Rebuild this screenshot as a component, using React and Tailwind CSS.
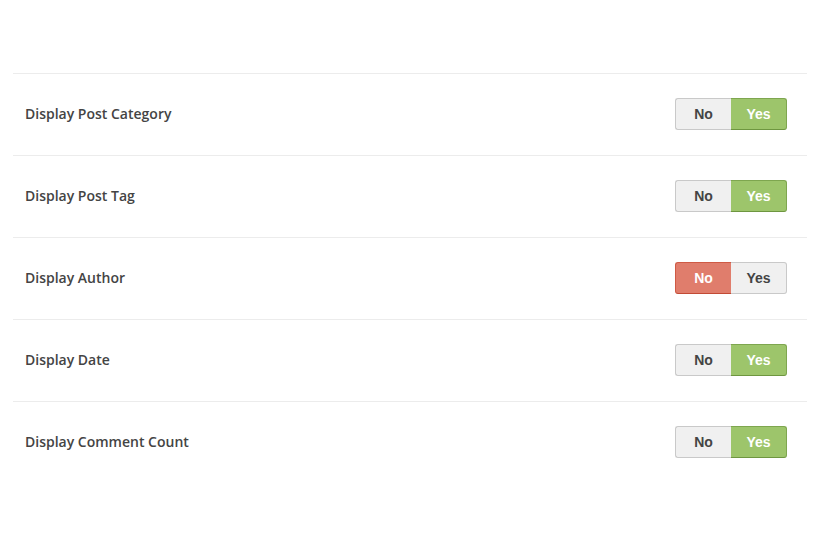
import React from "react";

const rows = [
  { label: "Display Post Category", yes: true },
  { label: "Display Post Tag", yes: true },
  { label: "Display Author", yes: false },
  { label: "Display Date", yes: true },
  { label: "Display Comment Count", yes: true },
];

function Toggle({ yes }) {
  return (
    <div className="flex h-[32px] w-[112px] font-['Liberation_Sans',Arial,sans-serif] text-[14px] font-bold">
      <div
        className={
          yes
            ? "flex w-[56px] items-center justify-center rounded-l-[3px] border border-r-0 border-[#c9c9c9] bg-[#f0f0f0] text-[#444]"
            : "flex w-[56px] items-center justify-center rounded-l-[3px] border border-r-0 border-[#cf5a45] border-b-[#c24a35] bg-[#e07d6c] text-white"
        }
      >
        No
      </div>
      <div
        className={
          yes
            ? "flex w-[56px] items-center justify-center rounded-r-[3px] border border-l-0 border-[#7ea64f] border-b-[#6e9640] bg-[#9dc56b] text-white"
            : "flex w-[56px] items-center justify-center rounded-r-[3px] border border-l-0 border-[#c9c9c9] bg-[#f0f0f0] text-[#444]"
        }
      >
        Yes
      </div>
    </div>
  );
}

export default function App() {
  return (
    <div className="h-[560px] w-[820px] bg-white pt-[73px] pl-[13px] pr-[13px]">
      {rows.map((r) => (
        <div
          key={r.label}
          className="flex h-[82px] items-center justify-between border-t border-[#ececec] pb-[1px] pl-[12px] pr-[20px]"
        >
          <span className="mb-[2px] font-['Open_Sans',sans-serif] text-[14px] font-semibold text-[#444]">
            {r.label}
          </span>
          <Toggle yes={r.yes} />
        </div>
      ))}
    </div>
  );
}
